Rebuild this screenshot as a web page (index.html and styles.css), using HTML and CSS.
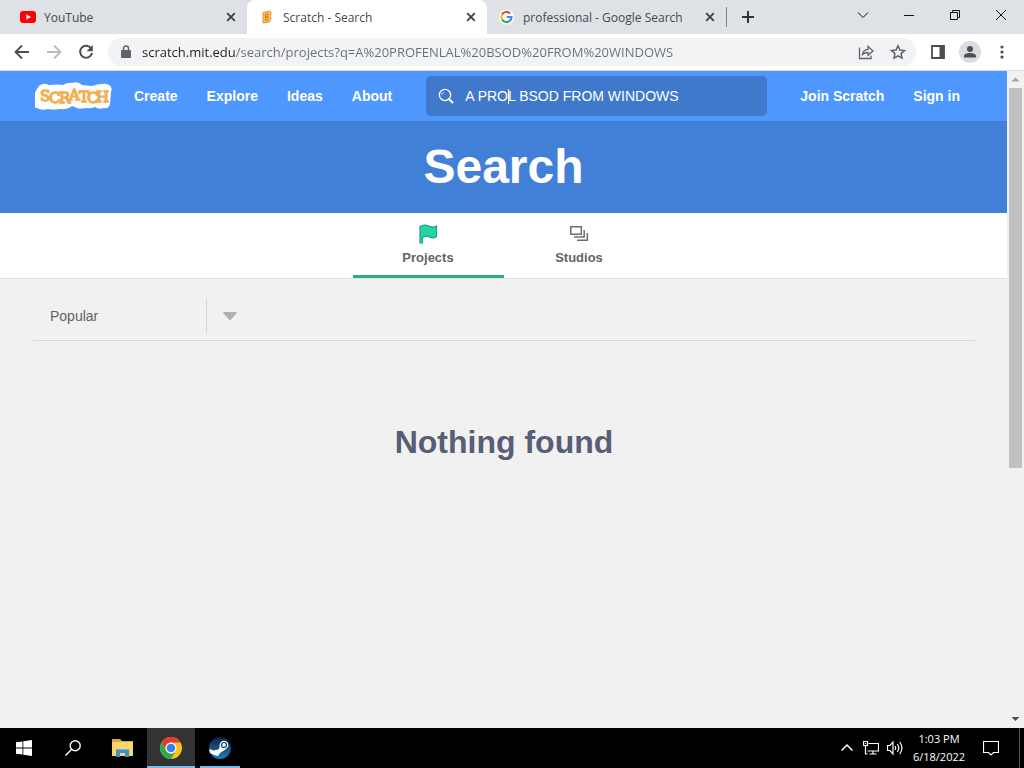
FILE: index.html
```html
<!DOCTYPE html>
<html lang="en">
<head>
  <meta charset="UTF-8">
  <title>Scratch - Search</title>
  <meta name="viewport" content="width=device-width, initial-scale=1.0">
  <link rel="stylesheet" href="styles.css">
</head>
<body>
  <header class="browser">
    <div class="tab-strip">
      <div class="tab tab-first">
        <svg class="favicon" viewBox="0 0 16 16"><rect y="2" width="16" height="12" rx="3" fill="#f00"/><path d="M6.3 5.3v5.4L11 8z" fill="#fff"/></svg>
        <span class="tab-title">YouTube</span>
        <button class="tab-close" aria-label="Close YouTube"><svg viewBox="0 0 10 10"><path d="M1.2 1.2l7.6 7.6M8.8 1.2L1.2 8.8"/></svg></button>
      </div>
      <div class="tab tab-active">
        <svg class="favicon" viewBox="0 0 16 16"><path d="M4 3.500l6.500-1.500q2 .5 1.500 3L11 7.500q1.200 1 .8 3L10.500 13l-6.500 1z" fill="#fbbf66" stroke="#e9952b" stroke-width="1"/><path d="M6.500 11.500V5.500q2.500-1.500 2.500.3T6.800 8q2.800-.3 2.300 1.700T6.500 11.500" fill="none" stroke="#d87f16" stroke-width="1.100"/></svg>
        <span class="tab-title">Scratch - Search</span>
        <button class="tab-close" aria-label="Close Scratch"><svg viewBox="0 0 10 10"><path d="M1.2 1.2l7.6 7.6M8.8 1.2L1.2 8.8"/></svg></button>
      </div>
      <div class="tab">
        <svg class="favicon" viewBox="0 0 16 16"><circle cx="7.500" cy="8" r="7.500" fill="#fff"/><g fill="none" stroke-width="2.200"><path d="M3 5.500A5 5 0 0 1 11 4.500" stroke="#ea4335"/><path d="M3 5.500a5 5 0 0 0 0 5" stroke="#fbbc05"/><path d="M3 10.500a5 5 0 0 0 7.700 1.300" stroke="#34a853"/><path d="M10.700 11.800A5 5 0 0 0 12.500 8H7.800" stroke="#4285f4"/></g></svg>
        <span class="tab-title">professional - Google Search</span>
        <button class="tab-close" aria-label="Close Google Search"><svg viewBox="0 0 10 10"><path d="M1.2 1.2l7.6 7.6M8.8 1.2L1.2 8.8"/></svg></button>
      </div>
      <button class="new-tab" aria-label="New tab"><svg viewBox="0 0 12 12"><path d="M6 0v12M0 6h12"/></svg></button>
      <div class="window-buttons">
        <button aria-label="Search tabs"><svg viewBox="0 0 12 12"><path d="M1 3.500l5 5 5-5"/></svg></button>
        <button aria-label="Minimize"><svg viewBox="0 0 12 12"><path d="M1 6.500h10"/></svg></button>
        <button aria-label="Restore"><svg viewBox="0 0 12 12"><path d="M1.500 3.500h7v7h-7zM3.500 3.500v-2h7v7h-2"/></svg></button>
        <button aria-label="Close"><svg viewBox="0 0 12 12"><path d="M1 1l10 10M11 1L1 11"/></svg></button>
      </div>
    </div>

    <div class="toolbar">
      <button class="tool" aria-label="Back"><svg viewBox="0 0 16 16"><path d="M15 8H2M8 1.500L1.500 8 8 14.500" fill="none" stroke="#4a4d51" stroke-width="1.800"/></svg></button>
      <button class="tool" aria-label="Forward"><svg viewBox="0 0 16 16"><path d="M1 8h13M8 1.500L14.500 8 8 14.500" fill="none" stroke="#b9bbbe" stroke-width="1.800"/></svg></button>
      <button class="tool" aria-label="Reload"><svg viewBox="0 0 16 16"><path d="M13.200 4.500A6 6 0 1 0 14 9" fill="none" stroke="#4a4d51" stroke-width="2"/><path d="M14.800 1v6.200H8.600z" fill="#4a4d51"/></svg></button>
      <div class="omnibox">
        <svg class="lock" viewBox="0 0 10 14"><rect y="5" width="10" height="8" rx="1" fill="#5f6368"/><path d="M2.500 6V3.500a2.500 2.500 0 0 1 5 0V6" fill="none" stroke="#5f6368" stroke-width="1.500"/></svg>
        <input class="address" type="text" aria-label="Address" value="scratch.mit.edu/search/projects?q=A%20PROFENLAL%20BSOD%20FROM%20WINDOWS">
        <button class="tool" aria-label="Share"><svg viewBox="0 0 16 16" fill="none" stroke="#5f6368" stroke-width="1.300"><path d="M1.500 3.500v11h11.500v-3"/><path d="M4.500 10.500c.5-3.500 2.500-5 5.500-5.200V2.500L15 7l-5 4.300V8.500c-2.500 0-4 .5-5.500 2z"/></svg></button>
        <button class="tool" aria-label="Bookmark"><svg viewBox="0 0 16 16"><path d="M8 1.800l1.900 4.200 4.600.5-3.400 3.100.9 4.500L8 11.800l-4 2.300.9-4.500L1.500 6.500 6.100 6z" fill="none" stroke="#5f6368" stroke-width="1.500"/></svg></button>
      </div>
      <button class="tool" aria-label="Side panel"><svg viewBox="0 0 16 16"><path d="M2 2h12v12H2z" fill="none" stroke="#4a4d51" stroke-width="1.800"/><path d="M9.500 2H14v12H9.500z" fill="#4a4d51"/></svg></button>
      <button class="tool" aria-label="Profile"><svg class="avatar" viewBox="0 0 22 22"><circle cx="11" cy="11" r="11" fill="#dadce0"/><circle cx="11" cy="8" r="3" fill="#4a5058"/><path d="M5 16.500v-1.500c0-2 3-3 6-3s6 1 6 3v1.500z" fill="#4a5058"/></svg></button>
      <button class="tool" aria-label="Menu"><svg viewBox="0 0 16 16" fill="#4a4d51"><circle cx="8" cy="3" r="1.600"/><circle cx="8" cy="8" r="1.600"/><circle cx="8" cy="13" r="1.600"/></svg></button>
    </div>
  </header>

  <div class="viewport">
    <main class="page">
      <nav class="site-nav">
        <a class="logo" href="#" aria-label="Scratch">
          <svg viewBox="0 0 77 30">
            <path d="M4 5q4-4 10-1 8-1 14 0Q33 1 37 2q6-2 10 2l10 1q6-2 9-2 5-1 8 1 4 2 2 7l-1 12q-1 5-6 4-5 2-9-1-5 2-9 1-6 1-9 0l-5-2q-5 4-12 3-7 1-12 0-6 2-11-1-7-1-6-8Q1 9 4 5z" fill="#fff"/>
            <text x="5 14 24 34 44 52 61" y="20 22 22 19 21 22 21">SCRATCH</text>
          </svg>
        </a>
        <div class="links">
          <a href="#">Create</a>
          <a href="#">Explore</a>
          <a href="#">Ideas</a>
          <a href="#">About</a>
        </div>
        <form class="search">
          <svg viewBox="0 0 16 16" fill="none" stroke="#fff" stroke-width="1.300"><circle cx="7" cy="7" r="5.600"/><path d="M11.200 11.200l3.300 3.300" stroke-width="2" stroke-linecap="round"/><path d="M4 7a3 3 0 0 1 2-2.700" stroke-width="1" opacity=".7"/></svg>
          <input type="text" aria-label="Search" value="A PROL BSOD FROM WINDOWS">
          <span class="caret"></span>
        </form>
        <div class="links account">
          <a href="#">Join Scratch</a>
          <a href="#">Sign in</a>
        </div>
      </nav>

      <div class="title-banner"><h1>Search</h1></div>

      <div class="page-tabs">
        <a class="page-tab active" href="#">
          <svg viewBox="0 0 20 20"><path d="M2 19V2.500C6 0 9 1 11.500 2.200c2.500 1.200 5 1 7-.2V12.500c-2.500 2-5 1.500-7 .5-2.500-1.200-5-1-7 .5V19z" fill="#25d3a5" stroke="#20a583" stroke-width="1.200"/></svg>
          <span>Projects</span>
        </a>
        <a class="page-tab" href="#">
          <svg viewBox="0 0 20 20" fill="none" stroke="#6b6f75" stroke-width="1.500"><path d="M1.800 2.800h10.500v7.500H1.800z"/><path d="M15.200 6v7H5M18.300 9v7.300H8"/></svg>
          <span>Studios</span>
        </a>
      </div>

      <div class="results">
        <form class="sort-row">
          <label class="sort">
            <select aria-label="Sort by">
              <option>Popular</option>
              <option>Trending</option>
            </select>
            <span class="sort-arrow"><svg viewBox="0 0 16 10"><path d="M2 1h12q1.500 0 .5 1.500L9 8.500q-1 1-2 0L1.500 2.500Q.5 1 2 1z" fill="#b1b1b1"/></svg></span>
          </label>
        </form>
        <h2>Nothing found</h2>
      </div>
    </main>

    <div class="scrollbar">
      <svg viewBox="0 0 17 17"><path d="M4.500 10.500h8l-4-4z" fill="#a3a3a3"/></svg>
      <div class="track"><div class="thumb"></div></div>
      <svg viewBox="0 0 17 17"><path d="M4.500 6h8l-4 4z" fill="#505050"/></svg>
    </div>
  </div>

  <footer class="taskbar">
    <button class="app" aria-label="Start"><svg viewBox="0 0 16 16" fill="#fff"><path d="M0 2.300L6.500 1.400v6.200H0zM7.300 1.300L16 0v7.600H7.300zM0 8.400h6.500v6.200L0 13.700zM7.300 8.400H16V16l-8.700-1.300z"/></svg></button>
    <button class="app" aria-label="Search"><svg viewBox="0 0 16 16" fill="none" stroke="#fff" stroke-width="1.400"><circle cx="10.200" cy="5.800" r="5"/><path d="M6.700 9.300L.5 15.500"/></svg></button>
    <button class="app" aria-label="File Explorer"><svg class="big" viewBox="0 0 26 26"><path d="M3 4h8l2 2h11v4H3z" fill="#d9a93b"/><path d="M3 7h21v14H3z" fill="#fbd66c"/><path d="M7 14h13v8h-4v-4h-5v4H7z" fill="#3f8fc9"/><path d="M7 14h13v1H7z" fill="#69b4e4"/></svg></button>
    <button class="app app-current" aria-label="Google Chrome"><svg class="big" viewBox="0 0 26 26"><circle cx="13" cy="13" r="11" fill="#fbc116"/><path d="M3.470 7.500A11 11 0 0 1 22.500 7.500H13a5.500 5.500 0 0 0-4.800 8.200z" fill="#e33b2e"/><path d="M3.470 7.500A11 11 0 0 0 13 24l4.800-8.300a5.500 5.500 0 0 1-9.600 0z" fill="#2da94f"/><circle cx="13" cy="13" r="5.500" fill="#fff"/><circle cx="13" cy="13" r="4.300" fill="#3d7eeb"/></svg></button>
    <button class="app app-running" aria-label="Steam"><svg class="big" viewBox="0 0 26 26"><defs><linearGradient id="steam" x2="0" y2="1"><stop stop-color="#101f45"/><stop offset="1" stop-color="#1b83b9"/></linearGradient></defs><circle cx="13" cy="13" r="11" fill="url(#steam)"/><path d="M2 14l6 2 4-2 1-5 6 5-6 4-2 3-4-1-4-2z" fill="#fff"/><circle cx="9.500" cy="17.500" r="2.800" fill="#fff"/><circle cx="17" cy="10" r="4.300" fill="#fff"/><circle cx="17" cy="10" r="2.500" fill="none" stroke="#1a3763" stroke-width="1.200"/></svg></button>
    <div class="tray">
      <button aria-label="Show hidden icons"><svg viewBox="0 0 16 16"><path d="M2.500 10.500L8 5l5.500 5.500" stroke-width="1.500"/></svg></button>
      <button aria-label="Network"><svg viewBox="0 0 16 16"><path d="M5.500 3.500h10v7.500h-11M10 11v3M6.500 14h7M.500 1.500h4v4h-4zM2.500 5.500v8.500h2M2.500 3v1"/></svg></button>
      <button aria-label="Volume"><svg viewBox="0 0 16 16"><path d="M.5 5.500h2.500l3-3.500v12l-3-3.500H.5zM8 6q1.500 2 0 4M10.300 4q3 4 0 8M12.700 2q4.500 6 0 12"/></svg></button>
      <div class="clock"><span>1:03 PM</span><span>6/18/2022</span></div>
      <button class="notices" aria-label="Notifications"><svg viewBox="0 0 16 16"><path d="M.5 1.500h15v11h-5L8 15l-2.500-2.500h-5z"/></svg></button>
    </div>
  </footer>
</body>
</html>
```

FILE: styles.css
```css
* {
  box-sizing: border-box;
}
body {
  margin: 0;
  height: 100vh;
  display: flex;
  flex-direction: column;
  overflow: hidden;
  font-family: "Liberation Sans", Arial, sans-serif;
  background: #f1f1f1;
}
button {
  border: none;
  background: none;
  padding: 0;
  display: flex;
  align-items: center;
  justify-content: center;
}
a {
  color: inherit;
  text-decoration: none;
}
svg {
  display: block;
  flex: none;
}

/* browser */
.browser {
  font-family: "Open Sans", "Noto Sans", sans-serif;
  flex: none;
}
.tab-strip {
  display: flex;
  height: 34px;
  background: #dee1e6;
}
.tab {
  display: flex;
  align-items: center;
  flex: 0 1 239px;
  gap: 8px;
  padding: 0 11px 0 12px;
  font-size: 12px;
  color: #45494d;
}
.tab-first {
  flex-basis: 247px;
  padding-left: 20px;
}
.tab-active {
  flex-basis: 240px;
  background: #fff;
  border-radius: 8px 8px 0 0;
}
.favicon {
  width: 16px;
  height: 16px;
}
.tab-title {
  flex: 1;
  white-space: nowrap;
  overflow: hidden;
}
.tab-close svg {
  width: 10px;
  height: 10px;
  stroke: #3c4043;
  stroke-width: 1.8;
}
.new-tab {
  align-self: center;
  height: 20px;
  padding-left: 15px;
  border-left: 1px solid #808387;
}
.new-tab svg {
  width: 12px;
  height: 12px;
  stroke: #303336;
  stroke-width: 2;
}
.window-buttons {
  display: flex;
  margin-left: auto;
  height: 29px;
}
.window-buttons button {
  width: 46px;
}
.window-buttons svg {
  width: 12px;
  height: 12px;
  fill: none;
  stroke: #111;
}
.toolbar {
  display: flex;
  align-items: center;
  height: 37px;
  padding: 0 6px;
  background: #fff;
  border-bottom: 1px solid #dadce0;
}
.tool {
  width: 32px;
  height: 28px;
  flex: none;
}
.tool svg {
  width: 16px;
  height: 16px;
}
.tool .avatar {
  width: 22px;
  height: 22px;
}
.omnibox {
  display: flex;
  align-items: center;
  flex: 1;
  height: 28px;
  margin: 0 6px;
  padding: 0 2px 0 13px;
  border-radius: 14px;
  background: #f1f3f4;
}
.lock {
  width: 10px;
  height: 14px;
}
/* host part is darker than the path */
.address {
  flex: 1;
  min-width: 0;
  margin-left: 11px;
  padding: 0;
  border: none;
  outline: none;
  font: 13px "Open Sans", "Noto Sans", sans-serif;
  background: linear-gradient(to right, #202124 94px, #6a6e73 94px);
  -webkit-background-clip: text;
  background-clip: text;
  -webkit-text-fill-color: transparent;
}

/* page */
.viewport {
  display: flex;
  flex: 1;
  min-height: 0;
}
.page {
  flex: 1;
  min-width: 0;
  overflow: hidden;
}
.site-nav {
  display: flex;
  align-items: center;
  height: 51px;
  padding: 0 47px 0 35px;
  background: #4d97ff;
  border-bottom: 1px solid #3d79cc;
  color: #fff;
}
.logo {
  width: 77px;
  margin-right: 22px;
}
.logo svg {
  width: 77px;
  height: 30px;
}
.logo text {
  font: 15px "DejaVu Serif", serif;
  fill: #fbb95a;
  stroke: #f0ae50;
  stroke-width: 1.3;
}
.links {
  display: flex;
  gap: 29px;
  font-size: 14px;
  font-weight: bold;
  white-space: nowrap;
}
.search {
  position: relative;
  display: flex;
  align-items: center;
  flex: 1;
  height: 40px;
  margin: 0 33px 0 34px;
  padding-left: 12px;
  border-radius: 5px;
  background: #4079cc;
}
.search svg {
  width: 16px;
  height: 16px;
}
.search input {
  flex: 1;
  min-width: 0;
  margin-left: 11px;
  padding: 0;
  border: none;
  outline: none;
  background: none;
  color: #fff;
  font: 14px "Liberation Sans", Arial, sans-serif;
}
.caret {
  position: absolute;
  left: 82px;
  top: 13px;
  width: 1px;
  height: 15px;
  background: #fff;
}
.title-banner {
  padding: 17px 0 19px;
  background: #4280d7;
  color: #fff;
  text-align: center;
}
h1 {
  margin: 0;
  font-size: 48px;
  line-height: 55px;
}
.page-tabs {
  display: flex;
  justify-content: center;
  background: #fff;
  border-bottom: 1px solid #dedede;
}
.page-tab {
  display: flex;
  flex-direction: column;
  align-items: center;
  width: 151px;
  height: 65px;
  padding-top: 11px;
  gap: 6px;
  border-bottom: 3px solid transparent;
  font-size: 13px;
  line-height: 16px;
  font-weight: bold;
  color: #5f636a;
}
.page-tab.active {
  border-color: #2bac87;
}
.page-tab svg {
  width: 20px;
  height: 20px;
}
.results {
  padding: 0 32px 0 33px;
  text-align: center;
}
.sort-row {
  display: flex;
  padding: 20px 0 7px;
  border-bottom: 1px solid #d5d5d5;
}
.sort {
  position: relative;
  height: 34px;
}
.sort select {
  appearance: none;
  width: 220px;
  height: 34px;
  padding: 0 17px;
  border: none;
  outline: none;
  background: none;
  color: #5f636a;
  font: 14px "Liberation Sans", Arial, sans-serif;
}
.sort-arrow {
  position: absolute;
  top: 0;
  left: 173px;
  height: 34px;
  padding-left: 15px;
  display: flex;
  align-items: center;
  border-left: 1px solid #d5d5d5;
  pointer-events: none;
}
.sort-arrow svg {
  width: 16px;
  height: 10px;
}
h2 {
  margin: 82px 0 0;
  font-size: 32px;
  line-height: 38px;
  color: #575e75;
}
.scrollbar {
  display: flex;
  flex-direction: column;
  width: 17px;
  background: #f1f1f1;
}
.scrollbar svg {
  width: 17px;
  height: 17px;
}
.track {
  flex: 1;
  padding: 0 2px;
}
.thumb {
  height: 61%;
  background: #c1c1c1;
}

/* taskbar */
.taskbar {
  display: flex;
  gap: 1px;
  flex: none;
  height: 40px;
  background: #000;
}
.app {
  width: 48px;
  border-top: 2px solid transparent;
  border-bottom: 2px solid transparent;
}
.app svg {
  width: 16px;
  height: 16px;
}
.app .big {
  width: 26px;
  height: 26px;
}
.app-current {
  background: #333;
  border-bottom-color: #76b9ed;
}
.app-running {
  width: 40px;
  margin-left: 4px;
  border-bottom-color: #76b9ed;
}
.tray {
  display: flex;
  margin-left: auto;
  margin-right: 4px;
  border-right: 1px solid #555;
  color: #fff;
}
.tray button {
  width: 24px;
}
.tray svg {
  width: 16px;
  height: 16px;
  fill: none;
  stroke: #fff;
  stroke-width: 1.2;
}
.clock {
  display: flex;
  flex-direction: column;
  align-items: center;
  justify-content: center;
  width: 64px;
  font: 11px/18px "Open Sans", "Noto Sans", sans-serif;
}
.tray .notices {
  width: 48px;
  padding-right: 8px;
}
```
